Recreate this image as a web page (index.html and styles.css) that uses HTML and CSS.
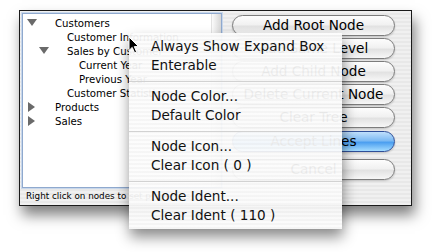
FILE: index.html
```html
<!DOCTYPE html>
<html lang="en">
<head>
    <meta charset="UTF-8">
    <title>Hierarchical list</title>
    <link rel="stylesheet" href="styles.css">
</head>
<body>
    <div class="window">
        <div class="left">
            <div class="tree">
                <div class="rows">
                    <div class="row l0"><span class="twist"><svg width="10" height="8" viewBox="0 0 10 8"><polygon points="0,0 10,0 5,7" fill="#6a6a6a"/></svg></span><span>Customers</span></div>
                    <div class="row l1"><span class="twist"></span><span>Customer Information</span></div>
                    <div class="row l1"><span class="twist"><svg width="10" height="8" viewBox="0 0 10 8"><polygon points="0,0 10,0 5,7" fill="#6a6a6a"/></svg></span><span>Sales by Customer</span></div>
                    <div class="row l2"><span class="twist"></span><span>Current Year</span></div>
                    <div class="row l2"><span class="twist"></span><span>Previous Year</span></div>
                    <div class="row l1"><span class="twist"></span><span>Customer Statistics</span></div>
                    <div class="row l0"><span class="twist right"><svg width="8" height="10" viewBox="0 0 8 10"><polygon points="0,0 7,5 0,10" fill="#6a6a6a"/></svg></span><span>Products</span></div>
                    <div class="row l0"><span class="twist right"><svg width="8" height="10" viewBox="0 0 8 10"><polygon points="0,0 7,5 0,10" fill="#6a6a6a"/></svg></span><span>Sales</span></div>
                </div>
                <div class="vbar"></div>
            </div>
            <div class="status">Right click on nodes to set properties</div>
        </div>
        <div class="buttons">
            <div class="btn">Add Root Node</div>
            <div class="btn">Add Same Level</div>
            <div class="btn">Add Child Node</div>
            <div class="btn">Delete Current Node</div>
            <div class="btn">Clear Tree</div>
            <div class="btn default">Accept Lines</div>
            <div class="btn cancel">Cancel</div>
        </div>
    </div>

    <div class="menu">
        <div class="item">Always Show Expand Box</div>
        <div class="item">Enterable</div>
        <div class="sep"></div>
        <div class="item">Node Color...</div>
        <div class="item">Default Color</div>
        <div class="sep"></div>
        <div class="item">Node Icon...</div>
        <div class="item">Clear Icon ( 0 )</div>
        <div class="sep"></div>
        <div class="item">Node Ident...</div>
        <div class="item">Clear Ident ( 110 )</div>
    </div>

    <svg class="cursor" width="12" height="18" viewBox="0 0 12 18">
        <path d="M1 1 L1 14.5 L4.2 11.4 L6.6 16.8 L8.6 15.9 L6.3 10.6 L10.6 10.6 Z" fill="#000" stroke="#fff" stroke-width="1"/>
    </svg>
</body>
</html>
```

FILE: styles.css
```css
body {
    margin: 0;
    width: 432px;
    height: 252px;
    overflow: hidden;
    position: relative;
    background: #fff;
    font-family: "DejaVu Sans", sans-serif;
    color: #000;
}
.window {
    margin: 10px 0 0 19px;
    width: 391px;
    height: 194px;
    border: 1px solid #1a1a1a;
    display: flex;
    background: repeating-linear-gradient(#f0f0f0 0 2px, #e8e8e8 2px 4px);
    box-shadow: 3px 9px 13px rgba(0,0,0,0.5);
}
.left {
    display: flex;
    flex-direction: column;
    padding: 2px 0 0 2px;
    width: 200px;
}
.tree {
    box-sizing: border-box;
    height: 175px;
    border: 1px solid #8fa9ce;
    box-shadow: 0 0 0 1px #c8d7eb;
    background: #fff;
    display: flex;
}
.rows {
    flex: 1;
    padding-top: 2px;
}
.row {
    height: 14px;
    display: flex;
    align-items: center;
    font-size: 10.2px;
    white-space: nowrap;
}
.l1 { padding-left: 12px; }
.l2 { padding-left: 24px; }
.twist {
    box-sizing: border-box;
    width: 32px;
    flex: none;
    padding-left: 4px;
    display: flex;
    align-items: center;
}
.twist.right {
    padding-left: 5px;
}
.vbar {
    width: 9px;
    border-left: 1px solid #e2e2e2;
    background: linear-gradient(to right, #fbfbfb, #d6d6d6);
}
.status {
    font-size: 8.8px;
    height: 16px;
    line-height: 17px;
    padding-left: 4px;
    white-space: nowrap;
}
.buttons {
    display: flex;
    flex-direction: column;
    margin-left: 10px;
    width: 163px;
    padding-top: 4px;
}
.btn {
    box-sizing: border-box;
    height: 21px;
    margin-bottom: 2px;
    border: 1px solid #7c7c7c;
    border-radius: 11px;
    background: linear-gradient(#fdfdfd, #f1f1f1 45%, #e2e2e2 55%, #f7f7f7);
    box-shadow: 0 1px 2px rgba(0,0,0,0.2);
    font-size: 13.6px;
    line-height: 19px;
    text-align: center;
    white-space: nowrap;
}
.default {
    margin-top: 1px;
    border-color: #2f4f98;
    background: linear-gradient(#c0e0fc, #7dbaf3 45%, #4c9ff0 55%, #a4dcff);
}
.cancel {
    margin-top: 5px;
}
.menu {
    position: absolute;
    left: 129px;
    top: 33px;
    width: 213px;
    padding: 4px 0;
    background: repeating-linear-gradient(rgba(252,252,252,0.94) 0 2px, rgba(245,245,245,0.94) 2px 4px);
    box-shadow: 1px 8px 13px rgba(0,0,0,0.45);
    font-size: 13.6px;
}
.item {
    height: 19px;
    line-height: 19px;
    padding-left: 22px;
    color: #111;
    white-space: nowrap;
}
.sep {
    height: 12px;
    display: flex;
    align-items: center;
}
.sep::after {
    content: "";
    flex: 1;
    height: 1px;
    background: #d2d2d2;
}
.cursor {
    position: absolute;
    left: 128px;
    top: 36px;
}
```
